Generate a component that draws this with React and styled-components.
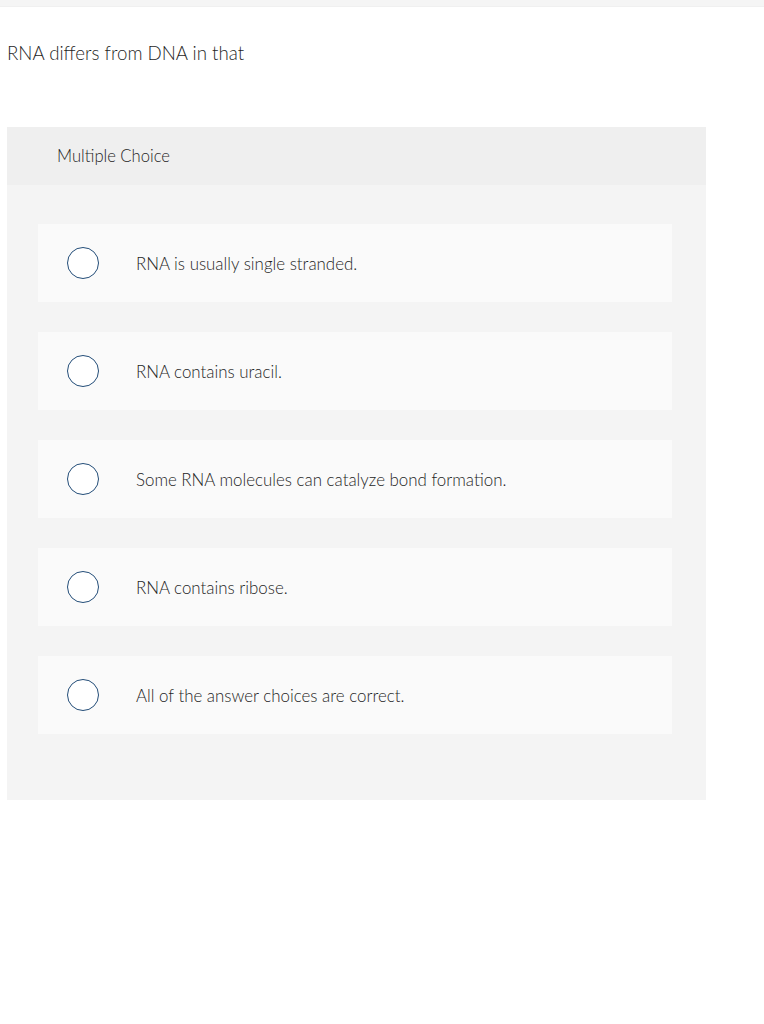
import React from "react";
import styled, { createGlobalStyle } from "styled-components";

const GlobalStyle = createGlobalStyle`
  html, body {
    margin: 0;
    padding: 0;
    background: #ffffff;
  }
  body {
    font-family: "Lato", "Open Sans", "Liberation Sans", sans-serif;
    color: #333333;
  }
`;

const choices = [
  "RNA is usually single stranded.",
  "RNA contains uracil.",
  "Some RNA molecules can catalyze bond formation.",
  "RNA contains ribose.",
  "All of the answer choices are correct.",
];

const App = () => {
  return (
    <>
      <GlobalStyle />
      <TopBar />
      <Page>
        <Question>RNA differs from DNA in that</Question>
        <Card>
          <CardHeader>Multiple Choice</CardHeader>
          <ChoiceList>
            {choices.map((text) => (
              <Choice key={text}>
                <Radio />
                <ChoiceText>{text}</ChoiceText>
              </Choice>
            ))}
          </ChoiceList>
        </Card>
      </Page>
    </>
  );
};

const TopBar = styled.div`
  height: 6px;
  background: #f5f5f5;
  border-bottom: 1px solid #f0f0f0;
`;

const Page = styled.main`
  padding: 0 58px 0 7px;
`;

const Question = styled.p`
  margin: 0;
  padding-top: 35px;
  height: 83px;
  box-sizing: border-box;
  font-size: 18.7px;
  font-weight: 300;
  line-height: 22px;
  color: #1f1f1f;
`;

const Card = styled.section`
  margin-top: 37px;
  width: 699px;
  background: #f4f4f4;
  padding-bottom: 66px;
`;

const CardHeader = styled.div`
  height: 58px;
  display: flex;
  align-items: center;
  padding-left: 50px;
  background: #efefef;
  font-size: 16.6px;
  font-weight: 300;
  color: #1f1f1f;
`;

const ChoiceList = styled.div`
  display: flex;
  flex-direction: column;
  gap: 30px;
  padding: 39px 34px 0 31px;
`;

const Choice = styled.label`
  display: flex;
  align-items: center;
  height: 78px;
  background: #fafafa;
  padding-left: 29px;
  cursor: pointer;
`;

const Radio = styled.span`
  width: 30px;
  height: 30px;
  border: 1.5px solid #234d78;
  border-radius: 50%;
  background: #ffffff;
  flex-shrink: 0;
`;

const ChoiceText = styled.span`
  margin-left: 37px;
  font-size: 16.9px;
  font-weight: 300;
  color: #1f1f1f;
`;

export default App;
